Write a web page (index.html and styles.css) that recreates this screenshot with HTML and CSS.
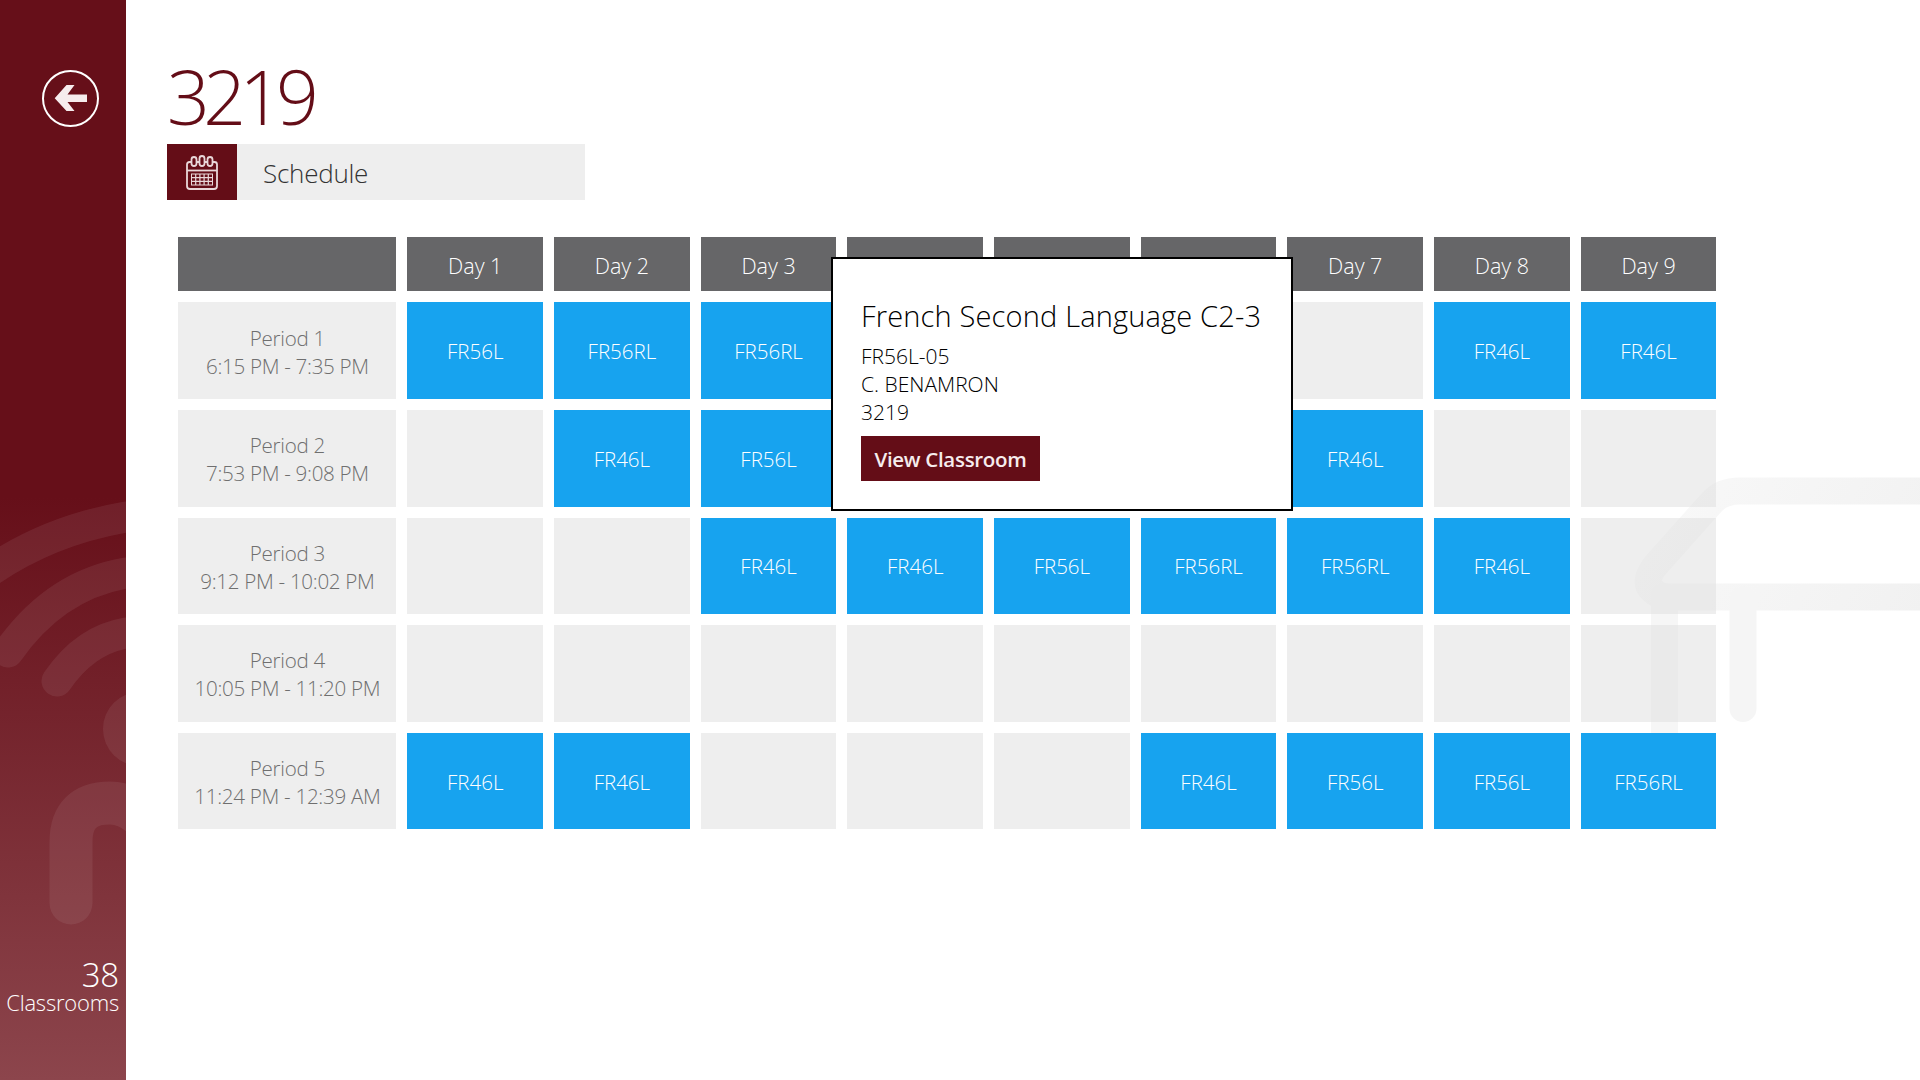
FILE: index.html
```html
<!DOCTYPE html>
<html lang="en">
<head>
  <meta charset="UTF-8">
  <title>3219 Schedule</title>
  <link rel="stylesheet" href="styles.css">
</head>
<body>

  <svg class="watermark" width="300" height="360" viewBox="1620 470 300 360">
    <defs>
      <linearGradient id="markFade" gradientUnits="userSpaceOnUse" x1="1640" y1="480" x2="1920" y2="620">
        <stop offset="0" stop-color="#f9f9f9" />
        <stop offset="1" stop-color="#f1f1f1" />
      </linearGradient>
    </defs>
    <path stroke="url(#markFade)" d="M1920 491 H1740 Q1722 491 1712 502 L1655 566 Q1643 582 1652 590 Q1659 597 1668 597 H1920" />
    <path stroke="#f6f6f6" d="M1664.5 597 V800" />
    <path stroke="#f5f5f5" d="M1743 600 V708.5" />
  </svg>

  <aside class="sidebar">
    <svg class="sidebar-art" width="126" height="1080" viewBox="0 0 126 1080">
      <path d="M126 517 Q50 530 -10 571" />
      <path d="M126 573 Q55 585 8 652" />
      <path d="M126 633 Q85 640 57 681" />
      <circle cx="140" cy="729" r="37" class="dot" />
      <path d="M71 903 V842 Q71 803 110 803 Q126 803 140 815" />
    </svg>
    <a class="back" href="#">
      <svg width="57" height="57" viewBox="0 0 57 57">
        <circle cx="28.5" cy="28.5" r="27.5" fill="none" stroke="#fff" stroke-width="2" />
        <path d="M24.5 15 H32.5 L25.5 24.5 H45 V32 H25.5 L32.5 41 H24.5 L12.7 28.3 Z" fill="#f6eced" />
      </svg>
    </a>
    <div class="count"><span class="count-num">38</span><br>Classrooms</div>
  </aside>

  <main class="content">
    <h1>3219</h1>

    <div class="section-bar">
      <div class="section-icon">
        <svg width="34" height="36" viewBox="0 0 34 36" fill="none" stroke="#e9d7d9" stroke-width="1.8">
          <path d="M6 8 H4.5 Q2 8 2 10.5 V32 Q2 35 5 35 H29 Q32 35 32 32 V10.5 Q32 8 29.5 8 H28" />
          <path d="M2 16.5 H32" />
          <path d="M11.5 8 H14.5 M19.5 8 H22.5" />
          <rect x="6.5" y="3" width="5" height="9" rx="2.5" />
          <rect x="14.5" y="2" width="5" height="10" rx="2.5" />
          <rect x="22.5" y="3" width="5" height="9" rx="2.5" />
          <rect x="6.5" y="20" width="21" height="11" stroke-width="1" />
          <path d="M10.7 20 V31 M14.9 20 V31 M19.1 20 V31 M23.3 20 V31 M6.5 23.7 H27.5 M6.5 27.3 H27.5" stroke-width="1.2" />
        </svg>
      </div>
      <div class="section-title">Schedule</div>
    </div>

    <div class="schedule">
      <div class="cell head"></div>
      <div class="cell head">Day 1</div>
      <div class="cell head">Day 2</div>
      <div class="cell head">Day 3</div>
      <div class="cell head">Day 4</div>
      <div class="cell head">Day 5</div>
      <div class="cell head">Day 6</div>
      <div class="cell head">Day 7</div>
      <div class="cell head">Day 8</div>
      <div class="cell head">Day 9</div>

      <div class="cell period">Period 1<br>6:15 PM - 7:35 PM</div>
      <div class="cell course">FR56L</div>
      <div class="cell course">FR56RL</div>
      <div class="cell course">FR56RL</div>
      <div class="cell course"></div>
      <div class="cell course"></div>
      <div class="cell course"></div>
      <div class="cell"></div>
      <div class="cell course">FR46L</div>
      <div class="cell course">FR46L</div>

      <div class="cell period">Period 2<br>7:53 PM - 9:08 PM</div>
      <div class="cell"></div>
      <div class="cell course">FR46L</div>
      <div class="cell course">FR56L</div>
      <div class="cell course"></div>
      <div class="cell course"></div>
      <div class="cell course"></div>
      <div class="cell course">FR46L</div>
      <div class="cell"></div>
      <div class="cell"></div>

      <div class="cell period">Period 3<br>9:12 PM - 10:02 PM</div>
      <div class="cell"></div>
      <div class="cell"></div>
      <div class="cell course">FR46L</div>
      <div class="cell course">FR46L</div>
      <div class="cell course">FR56L</div>
      <div class="cell course">FR56RL</div>
      <div class="cell course">FR56RL</div>
      <div class="cell course">FR46L</div>
      <div class="cell"></div>

      <div class="cell period">Period 4<br>10:05 PM - 11:20 PM</div>
      <div class="cell"></div>
      <div class="cell"></div>
      <div class="cell"></div>
      <div class="cell"></div>
      <div class="cell"></div>
      <div class="cell"></div>
      <div class="cell"></div>
      <div class="cell"></div>
      <div class="cell"></div>

      <div class="cell period">Period 5<br>11:24 PM - 12:39 AM</div>
      <div class="cell course">FR46L</div>
      <div class="cell course">FR46L</div>
      <div class="cell"></div>
      <div class="cell"></div>
      <div class="cell"></div>
      <div class="cell course">FR46L</div>
      <div class="cell course">FR56L</div>
      <div class="cell course">FR56L</div>
      <div class="cell course">FR56RL</div>
    </div>
  </main>

  <div class="popup">
    <h2>French Second Language C2-3</h2>
    <div class="popup-line">FR56L-05</div>
    <div class="popup-line">C. BENAMRON</div>
    <div class="popup-line">3219</div>
    <button type="button" class="popup-btn">View Classroom</button>
  </div>

</body>
</html>
```

FILE: styles.css
```css
html, body { height: 100%; }
body { margin: 0; display: flex; height: 1080px; overflow: hidden; background: #fff; font-family: "Open Sans", "Noto Sans", sans-serif; }

.watermark { position: absolute; left: 1620px; top: 470px; fill: none; stroke-width: 27; stroke-linecap: round; stroke-linejoin: round; }

.sidebar { position: relative; width: 126px; flex: none; display: flex; flex-direction: column; justify-content: space-between; background: linear-gradient(#660f19 0, #660f19 46%, #8c454c 100%); color: #fff; }
.sidebar-art { position: absolute; left: 0; top: 0; fill: none; stroke: rgba(255,255,255,0.07); stroke-width: 31; stroke-linecap: round; }
.sidebar-art .dot { fill: rgba(255,255,255,0.07); stroke: none; }
.sidebar-art path:last-child { stroke-width: 43; }
.back { position: relative; display: block; width: 57px; height: 57px; margin: 70px 0 0 42px; }
.count { position: relative; padding-right: 7px; margin-bottom: 66px; text-align: right; font-size: 22px; line-height: 24px; font-weight: 300; letter-spacing: -0.2px; }
.count-num { font-size: 33px; }

.content { position: relative; padding: 60px 0 0 41px; flex: 1; }
h1 { margin: 0; height: 84px; font-size: 75px; line-height: 72px; font-weight: 300; color: #640d17; letter-spacing: -6.5px; }

.section-bar { display: flex; width: 418px; height: 56px; background: #eee; }
.section-icon { width: 70px; display: flex; align-items: center; justify-content: center; background: #640d17; }
.section-title { padding-left: 26px; font-size: 26px; line-height: 58px; font-weight: 300; color: #333; letter-spacing: -0.25px; }

.schedule { display: grid; grid-template-columns: 218px repeat(9, 1fr); grid-template-rows: 54px repeat(5, 96.6px); gap: 11px; width: 1538px; margin: 37.4px 0 0 11.4px; }
.cell { display: flex; align-items: center; justify-content: center; padding-top: 1px; text-align: center; background: rgba(221,221,221,0.5); font-size: 20px; font-weight: 300; }
.head { padding-top: 2px; background: #666668; color: #fff; font-size: 21.5px; }
.period { padding-top: 2px; color: #6f6f6f; font-size: 20.6px; line-height: 28px; letter-spacing: -0.3px; }
.course { background: #17a3ef; color: #fff; font-size: 20.5px; }

.popup { position: absolute; left: 831px; top: 257px; width: 462px; height: 254px; box-sizing: border-box; padding: 35px 28px 0; background: #fff; border: 2px solid #000; color: #000; }
.popup h2 { margin: 0 0 4px; font-size: 29px; line-height: 44px; font-weight: 350; letter-spacing: 0.17px; }
.popup-line { font-size: 21px; line-height: 28px; font-weight: 300; }
.popup-btn { display: block; width: 179px; height: 45px; margin-top: 10px; padding: 0; border: none; background: #640d17; color: #f6eced; font-family: inherit; font-size: 20.5px; font-weight: 600; letter-spacing: -0.3px; }
```
